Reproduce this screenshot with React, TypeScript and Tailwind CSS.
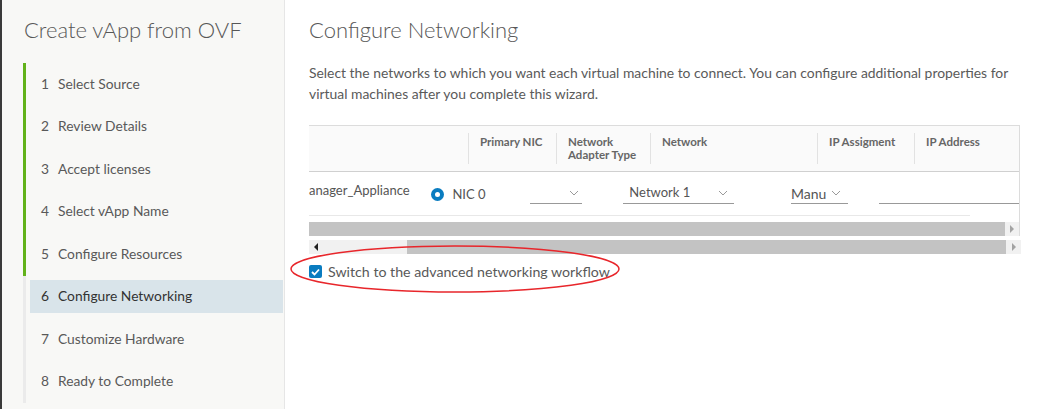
import React from "react";

const steps = [
  "Select Source",
  "Review Details",
  "Accept licenses",
  "Select vApp Name",
  "Configure Resources",
  "Configure Networking",
  "Customize Hardware",
  "Ready to Complete",
];

function Chevron() {
  return (
    <svg width="10" height="6" viewBox="0 0 10 6" className="shrink-0">
      <path d="M1 1 L5 5 L9 1" fill="none" stroke="#9a9a9a" strokeWidth="1" />
    </svg>
  );
}

export default function App() {
  return (
    <div
      className="relative flex h-[409px] w-[1037px] overflow-hidden bg-white text-[#565656]"
      style={{ fontFamily: "Lato, 'Open Sans', sans-serif" }}
    >
      {/* Sidebar */}
      <div className="flex h-full w-[285px] shrink-0 flex-col border-r border-[#e6e6e6] border-l-2 border-l-[#3a3a3a] bg-[#f8f8f6]">
        <div className="pl-[22px] pt-[16px] text-[22px] font-light leading-[28px] text-[#575757]">
          Create vApp from OVF
        </div>
        <div className="mt-[19px] ml-[21px] flex flex-col">
          {steps.map((s, i) => {
            const done = i < 5;
            const active = i === 5;
            return (
              <div
                key={s}
                className={`flex h-[42.5px] items-center border-l-[3px] ${
                  done ? "border-[#62b21a]" : "border-[#ebebeb]"
                }`}
              >
                <div
                  className={`ml-[4px] flex h-[33px] w-[253px] items-center whitespace-nowrap pl-[11px] text-[13.8px] ${
                    active ? "bg-[#d9e4ea] text-[#333]" : "text-[#595959]"
                  }`}
                >
                  <span className="w-[17px]">{i + 1}</span>
                  <span>{s}</span>
                </div>
              </div>
            );
          })}
        </div>
      </div>

      {/* Main */}
      <div className="flex flex-1 flex-col pl-[24px]">
        <div className="pt-[16px] text-[22px] font-light leading-[28px] text-[#575757]">
          Configure Networking
        </div>
        <div className="mt-[18px] w-[715px] text-[13.9px] leading-[21px] text-[#5a5a5a]">
          Select the networks to which you want each virtual machine to connect. You can configure additional properties for
          virtual machines after you complete this wizard.
        </div>

        {/* Table */}
        <div className="mt-[21px] w-[711px] border-t border-r border-[#dcdcdc]">
          <div className="flex h-[46px] border-b border-[#d0d0d0] bg-[#fafafa] text-[11.5px] font-bold leading-[13px] text-[#666]">
            <div className="w-[159px]" />
            {[
              ["Primary NIC", 88],
              ["Network Adapter Type", 94],
              ["Network", 167],
              ["IP Assigment", 97],
              ["IP Address", 104],
            ].map(([t, w]) => (
              <div key={t as string} className="flex items-stretch whitespace-nowrap" style={{ width: w as number }}>
                <div className="my-[7px] w-px bg-[#e2e2e2]" />
                <div className="pl-[11px] pr-[6px] pt-[9px]">
                  {t === "Network Adapter Type" ? (
                    <>
                      Network
                      <br />
                      Adapter Type
                    </>
                  ) : (
                    t
                  )}
                </div>
              </div>
            ))}
          </div>
          {/* Row */}
          <div className="flex h-[42px] items-start whitespace-nowrap pt-[11px] text-[13px] text-[#555]">
            <div className="w-[123px] leading-[14px]">anager_Appliance</div>
            <div className="flex items-center pt-[4px]">
              <div className="flex h-[13px] w-[13px] items-center justify-center rounded-full bg-[#0a7cc0]">
                <div className="h-[5px] w-[5px] rounded-full bg-white" />
              </div>
              <span className="ml-[8px] leading-[14px]">NIC 0</span>
            </div>
            <div className="ml-[44px] flex h-[21px] w-[53px] items-center justify-end border-b border-[#999] pr-[3px]">
              <Chevron />
            </div>
            <div className="ml-[41px] flex h-[21px] w-[111px] items-center justify-between border-b border-[#999] pl-[6px] pr-[6px]">
              <span>Network 1</span>
              <Chevron />
            </div>
            <div className="ml-[57px] flex h-[21px] w-[57px] items-center gap-[5px] border-b border-[#999]">
              <span className="text-[14px]">Manu</span>
              <Chevron />
            </div>
            <div className="ml-[31px] h-[21px] w-[141px] border-b border-[#999]" />
          </div>
          <div className="mt-[1px] h-px w-[661px] bg-[#e8e8e8]" />
          <div className="mt-[6px] flex h-[14px]">
            <div className="flex-1 bg-[#c3c3c3]" />
            <div className="flex w-[14px] items-center justify-center bg-[#f1f1f1]">
              <div className="h-0 w-0 border-y-[4px] border-l-[4px] border-y-transparent border-l-[#a3a3a3]" />
            </div>
          </div>
        </div>
        {/* second scrollbar */}
        <div className="mt-[4px] flex h-[14px] w-[712px]">
          <div className="flex w-[98px] items-center bg-[#f1f1f1] pl-[5px]">
            <div className="h-0 w-0 border-y-[4px] border-r-[4px] border-y-transparent border-r-[#222]" />
          </div>
          <div className="flex-1 bg-[#c3c3c3]" />
          <div className="flex w-[15px] items-center justify-center bg-[#f1f1f1]">
            <div className="h-0 w-0 border-y-[4px] border-l-[4px] border-y-transparent border-l-[#a3a3a3]" />
          </div>
        </div>
        {/* checkbox */}
        <div className="mt-[7px] flex items-center">
          <div className="flex h-[13px] w-[13px] items-center justify-center rounded-[2px] bg-[#0a7cc0]">
            <svg width="9" height="8" viewBox="0 0 9 8">
              <path d="M1 4 L3.5 6.5 L8 1.5" fill="none" stroke="white" strokeWidth="1.8" />
            </svg>
          </div>
          <span className="ml-[6px] whitespace-nowrap text-[14.2px] text-[#595959]">
            Switch to the advanced networking workflow
          </span>
        </div>
      </div>

      {/* Red annotation ellipse */}
      <svg className="pointer-events-none absolute left-0 top-0" width="1037" height="409">
        <ellipse cx="455" cy="269" rx="164" ry="23" fill="none" stroke="#e8262b" strokeWidth="1.5" />
      </svg>
    </div>
  );
}
